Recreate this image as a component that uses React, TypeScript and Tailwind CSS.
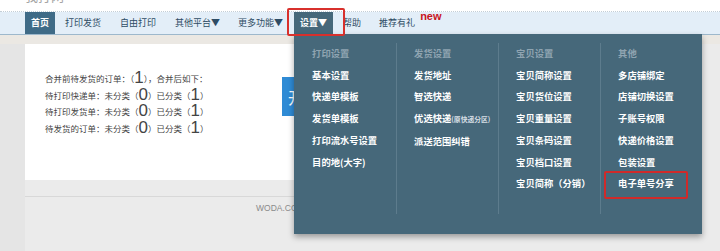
import React from "react";

const cjk = "font-['Noto_Sans_CJK_SC','Noto_Sans',sans-serif]";

interface MenuCol {
  title: string;
  items: string[];
}

const menuCols: MenuCol[] = [
  { title: "打印设置", items: ["基本设置", "快递单模板", "发货单模板", "打印流水号设置", "目的地(大字)"] },
  { title: "发货设置", items: ["发货地址", "智选快递", "优选快递", "派送范围纠错"] },
  {
    title: "宝贝设置",
    items: ["宝贝简称设置", "宝贝货位设置", "宝贝重量设置", "宝贝条码设置", "宝贝档口设置", "宝贝简称（分销）"],
  },
  { title: "其他", items: ["多店铺绑定", "店铺切换设置", "子账号权限", "快递价格设置", "包装设置", "电子单号分享"] },
];

function Count({ n }: { n: number }) {
  return (
    <>
      （<span className="font-['Liberation_Sans',sans-serif] text-[17px] leading-[14px]">{n}</span>）
    </>
  );
}

function SettingsMenu() {
  return (
    <div className="absolute left-0 top-full z-10 flex w-[408px] bg-[#46687a] pt-[9px] pb-[20px] shadow-[0_3px_6px_rgba(0,0,0,0.35)]">
      {menuCols.map((col, i) => (
        <div
          key={col.title}
          className={
            i === 0
              ? "h-[171px] w-[102px] pl-[18px]"
              : "h-[171px] w-[102px] border-l border-[#5d7c8d] pl-[17px]"
          }
        >
          <div className="text-[9.3px] leading-[21.7px] text-[#8fa4b1]">{col.title}</div>
          {col.items.map((item) => {
            if (item === "优选快递") {
              return (
                <div key={item} className="whitespace-nowrap text-[9.3px] leading-[21.7px] text-white">
                  优选快递<span className="text-[6.8px] text-[#d5dee4]">(原快递分区)</span>
                </div>
              );
            }
            if (item === "电子单号分享") {
              return (
                <div key={item} className="relative w-fit text-[9.3px] leading-[21.7px] text-white">
                  {item}
                  <span className="absolute -top-[2px] -bottom-[4px] -left-[14px] -right-[14px] rounded-[2px] border-2 border-[#d02a2a]" />
                </div>
              );
            }
            return (
              <div key={item} className="whitespace-nowrap text-[9.3px] leading-[21.7px] text-white">
                {item}
              </div>
            );
          })}
        </div>
      ))}
    </div>
  );
}

export default function App() {
  return (
    <div className={`flex h-[251px] w-[720px] flex-col overflow-hidden bg-[#ebebeb] ${cjk}`}>
      {/* header strip, logo mostly scrolled off the top */}
      <div className="h-[12px] overflow-hidden border-b border-dotted border-[#c3ced7] bg-white pl-[25px]">
        <div className="-mt-[9px] h-[13px] overflow-hidden text-[13px] leading-[10px] text-[#a5a5a5]">我打网</div>
      </div>

      {/* nav */}
      <div className="flex h-[23px] items-stretch border-b border-[#9db8cc] bg-[#e3eef8] pl-[25px] text-[9px] text-[#2e4c64]">
        <div className="flex items-center bg-[#3f6b87] px-[6px] font-bold text-white">首页</div>
        <div className="ml-[10px] flex items-center">打印发货</div>
        <div className="ml-[19px] flex items-center">自由打印</div>
        <div className="ml-[19px] flex items-center">其他平台▼</div>
        <div className="ml-[18px] flex items-center">更多功能▼</div>
        <div className="relative ml-[11px] flex items-center bg-[#46687a] px-[6px] font-bold text-white">
          设置▼
          <span className="absolute -top-[4px] -bottom-[2px] -left-[7px] -right-[12px] z-20 rounded-[2px] border-2 border-[#d8302c]" />
          <SettingsMenu />
        </div>
        <div className="ml-[10px] flex items-center">帮助</div>
        <div className="relative ml-[18px] flex items-center">
          推荐有礼
          <span className="absolute left-[calc(100%+5px)] top-[-1px] font-['Liberation_Sans',sans-serif] text-[11px] font-bold leading-none text-[#c8141e]">
            new
          </span>
        </div>
      </div>

      {/* body */}
      <div className="h-[9px] bg-[#ebe8e3]" />
      <div className="flex flex-1">
        <div className="w-[25px] bg-[#e5e5e5]" />
        <div className="flex flex-col">
          <div className="flex h-[136px] w-[676px] bg-white pl-[20px] pt-[26px]">
            <div className="w-[237px] text-[8.5px] leading-[16.6px] text-[#444]">
              <div className="flex h-[16.6px] items-center">
                合并前待发货的订单：<Count n={1} />，合并后如下：
              </div>
              <div className="flex h-[16.6px] items-center">
                待打印快递单：未分类<Count n={0} />已分类<Count n={1} />
              </div>
              <div className="flex h-[16.6px] items-center">
                待打印发货单：未分类<Count n={0} />已分类<Count n={1} />
              </div>
              <div className="flex h-[16.6px] items-center">
                待发货的订单：未分类<Count n={0} />已分类<Count n={1} />
              </div>
            </div>
            <button className="mt-[7px] h-[39px] w-[90px] bg-[#2f8bd5] pl-[6px] text-left text-[16px] text-white">
              开始合并
            </button>
          </div>
          <div className="h-[17px] border-b border-[#d8d8d8]" />
          <div className="ml-[231px] mt-[6px] font-['Liberation_Sans',sans-serif] text-[8.5px] leading-[10px] text-[#8a8a8a]">
            WODA.COM 版权所有
          </div>
        </div>
      </div>
    </div>
  );
}
